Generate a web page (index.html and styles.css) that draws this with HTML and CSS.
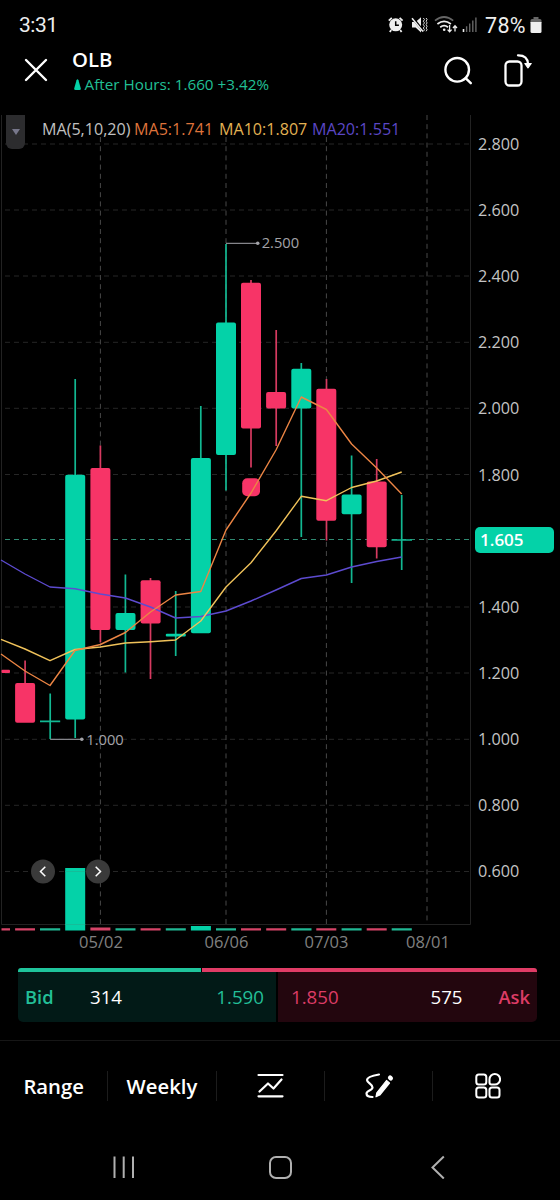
FILE: index.html
```html
<!DOCTYPE html>
<html lang="en">
<head>
  <meta charset="utf-8">
  <meta name="viewport" content="width=device-width, initial-scale=1">
  <title>OLB</title>
  <link rel="stylesheet" href="styles.css">
</head>
<body>
  <div class="status">
    <span class="clock">3:31</span>
    <svg class="status-icons" width="92" height="20" viewBox="387 15 92 20">
      <!-- alarm -->
      <circle cx="395.7" cy="24.8" r="6.5" fill="#eee"/>
      <path d="M388.8 20.6l3-2.8M402.6 20.6l-3-2.8M391.2 30l-1.4 2M400.2 30l1.4 2" stroke="#eee" stroke-width="1.8"/>
      <path d="M395.7 21.3v3.9h3.2" fill="none" stroke="#000" stroke-width="1.5"/>
      <!-- muted, vibrate -->
      <path d="M412 22h3.6l5.4-4.8v15.2l-5.4-4.8H412z" fill="#eee"/>
      <path d="M412.4 17.6l11 13.6" stroke="#000" stroke-width="2.6"/>
      <path d="M412 18.2l11 13.4" stroke="#eee" stroke-width="1.5"/>
      <path d="M423.3 18l1.2 1.6-1.2 1.6 1.2 1.7-1.2 1.7 1.2 1.7-1.2 1.7 1.2 1.7-1 1.6M426.1 18l1 1.6-1 1.6 1 1.7-1 1.7 1 1.7-1 1.7 1 1.7-1 1.6" fill="none" stroke="#ddd"/>
      <!-- wifi -->
      <path d="M435 20.6q9-7.2 18.2 0" fill="none" stroke="#666" stroke-width="1.7"/>
      <path d="M437.4 24q6.7-5.2 13.5 0M440.2 27.2q4-3 7.8 0" fill="none" stroke="#eee" stroke-width="1.8"/>
      <circle cx="444.2" cy="29.8" r="1.3" fill="#eee"/>
      <path d="M449.6 25v6.5M447.6 29.6l2 2.2 2-2.2M455 31.5v-5.8M453 28l2-2.2 2 2.2" fill="none" stroke="#eee" stroke-width="1.3"/>
      <!-- signal -->
      <path d="M463.5 29v3" stroke="#eee" stroke-width="1.6"/>
      <path d="M466.6 26.3V32M469.7 23.6V32M472.8 20.6V32M475.9 17.5V32" stroke="#666" stroke-width="1.4"/>
    </svg>
    <span class="percent">78%</span>
    <svg width="12" height="17" viewBox="0 0 12 17">
      <path d="M3.5 0h5v2H10q1.500 0 1.500 1.500V6H.5V3.500Q.5 2 2 2h1.500z" fill="#666"/>
      <path d="M.5 5h11v9.500q0 1.500-1.500 1.500H2q-1.500 0-1.500-1.500z" fill="#eee"/>
    </svg>
  </div>

  <div class="header">
    <svg class="close" width="24" height="24" viewBox="0 0 24 24">
      <path d="M2 2l20 20M22 2L2 22" stroke="#fff" stroke-width="2.4" stroke-linecap="round"/>
    </svg>
    <div class="stock">
      <div class="symbol">OLB</div>
      <div class="after-hours">
        <svg width="7" height="11" viewBox="0 0 7 11"><path d="M2.500 1.200Q3.500-.8 4.500 1.200L6.800 9.500Q7 11 5.500 11h-4Q0 11 .2 9.500z" fill="#04d2a8"/></svg>
        <span>After Hours: 1.660 +3.42%</span>
      </div>
    </div>
    <svg class="search" width="30" height="30" viewBox="0 0 30 30" fill="none" stroke="#fff" stroke-width="2.400" stroke-linecap="round">
      <circle cx="14.200" cy="13.800" r="11.800"/>
      <path d="M22.600 22.200l5.200 5"/>
    </svg>
    <svg class="rotate" width="28" height="34" viewBox="0 0 28 34" fill="none" stroke="#fff" stroke-width="2.300">
      <rect x="1.500" y="8.500" width="16" height="24" rx="4"/>
      <path d="M14 2.300q9.500-.2 10 8.500" stroke-linecap="round"/>
      <path d="M20.800 10.500l3.200 4.300 3.200-4.300z" fill="#fff" stroke-width="1.200" stroke-linejoin="round"/>
    </svg>
  </div>

  <div class="chart">
    <svg class="plot" width="472" height="841" viewBox="0 115 472 841">
      <g class="frame">
        <path d="M1.500 115V924.500M470.500 115V924.500M1.500 924.500H470.500"/>
      </g>
      <g class="grid-h">
        <path d="M5 144H470M5 210H470M5 276H470M5 342.300H470M5 408.300H470M5 474.500H470M5 607H470M5 673H470M5 739.300H470M5 805.300H470M5 871.500H470"/>
      </g>
      <g class="grid-v">
        <path d="M100.400 137V924M226 137V924M326.400 137V924M427 115V924"/>
      </g>
      <path class="last-price" d="M5 539.500H470"/>

      <g class="up">
        <path d="M50.200 693.500V739M75.200 379V738M125.400 574.500V672.500M175.700 591V656M200.800 406V460M226 244V490.500M301.300 363V537M351.600 455.500V583M401.700 495V570"/>
        <path d="M40 721.300H60.200M391.500 540H412" />
        <rect x="65.200" y="474.800" width="20" height="244.700" rx="2"/>
        <rect x="115.500" y="613" width="20" height="17" rx="2"/>
        <rect x="165.800" y="633.800" width="20" height="2.800" rx="1"/>
        <rect x="190.900" y="458" width="20" height="175.300" rx="2"/>
        <rect x="216" y="322.500" width="20" height="132.500" rx="2"/>
        <rect x="291.300" y="368.800" width="20" height="39.600" rx="2"/>
        <rect x="341.600" y="494.500" width="20" height="19.800" rx="2"/>
      </g>
      <g class="down">
        <path d="M25.100 660.500V684M100.400 445.500V642.500M150.500 578V679M251 280V467.500M276.200 330V446M326.500 379V540.500M376.700 459V558.500"/>
        <rect x="1.500" y="669.700" width="8.500" height="3.200" rx="1"/>
        <rect x="15.100" y="683" width="20" height="39.800" rx="2"/>
        <rect x="90.400" y="468" width="20" height="162" rx="2"/>
        <rect x="140.600" y="580.300" width="20" height="43.200" rx="2"/>
        <rect x="241" y="282.800" width="20" height="145.600" rx="2"/>
        <rect x="266.100" y="392" width="20" height="16.400" rx="2"/>
        <rect x="316.300" y="388.800" width="20" height="132" rx="2"/>
        <rect x="366.700" y="481.500" width="20" height="65.800" rx="2"/>
        <rect x="242.200" y="478.300" width="17.800" height="18" rx="5"/>
      </g>

      <g class="ma">
        <polyline class="ma20" points="1,560 25,574 50,587 75,588.700 100.400,594 125.400,598 150.500,607 175.600,618 200.800,616.500 226,611 251,601 276,590 301.300,578.500 326.400,575 351.600,567 376.700,561.500 401.700,557"/>
        <polyline class="ma10" points="1,639.300 25,649 50,660.700 75,649.500 100.400,647 125.400,643 150.500,641.700 175.600,640 200.800,621 226,587 251,562.700 276,531 301.300,496.300 326.400,500.700 351.600,487.500 376.700,481 401.700,472"/>
        <polyline class="ma5" points="1,654 25,671 50,685.500 75,650.500 100.400,644.500 125.400,632.500 150.500,612 175.600,595 200.800,591.500 226,530 251,493 276,450 301.300,397 326.400,409.500 351.600,444 376.700,468 401.700,494"/>
      </g>

      <!-- high / low markers -->
      <g class="marker">
        <path d="M226 243.300H257M50.200 739.300H81"/>
        <circle cx="257.700" cy="243.200" r="1.800"/>
        <circle cx="81.800" cy="739.300" r="1.800"/>
        <text x="261.700" y="248">2.500</text>
        <text x="86.300" y="744.500">1.000</text>
      </g>

      <!-- volume -->
      <g class="vol-up">
        <rect x="65.200" y="868" width="20" height="62.500"/>
        <rect x="190.900" y="926" width="20" height="4.500"/>
        <path d="M40 929.300H60.200M115.500 929.300H135.500M165.800 929.300H185.800M216 929.300H236M291.300 929.300H311.500M341.600 929.300H361.600M391.700 929.300H411.800"/>
      </g>
      <g class="vol-down">
        <path d="M1.500 929.300H10M15.100 929.300H35M140.600 929.300H160.600M241 929.300H261M266.200 929.300H286.200M316.300 929.300H336.300M366.700 929.300H386.700"/>
        <rect x="90.400" y="927.500" width="20" height="3"/>
      </g>
      <path d="M65.200 871.500H85.200M65.200 924.500H85.200" stroke="#1bb795" stroke-width=".8"/>

      <g class="pager">
        <circle cx="43" cy="871.500" r="12"/>
        <circle cx="98" cy="871.500" r="12"/>
        <path d="M45.300 866.700l-4.800 4.800 4.800 4.800M95.700 866.700l4.800 4.800-4.800 4.800"/>
      </g>

      <g class="dates">
        <text x="101" y="948">05/02</text>
        <text x="226.500" y="948">06/06</text>
        <text x="326.500" y="948">07/03</text>
        <text x="428" y="948">08/01</text>
      </g>
    </svg>

    <div class="prices">
      <span>2.800</span>
      <span>2.600</span>
      <span>2.400</span>
      <span>2.200</span>
      <span>2.000</span>
      <span>1.800</span>
      <span><b class="price-tag">1.605</b></span>
      <span>1.400</span>
      <span>1.200</span>
      <span>1.000</span>
      <span>0.800</span>
      <span>0.600</span>
    </div>

    <div class="legend">
      <div class="toggle"><i></i></div>
      <span class="l-name">MA(5,10,20)</span>
      <span class="l-ma5">MA5:1.741</span>
      <span class="l-ma10">MA10:1.807</span>
      <span class="l-ma20">MA20:1.551</span>
    </div>
  </div>

  <div class="book">
    <div class="ratio"><i class="ratio-bid"></i><i class="ratio-ask"></i></div>
    <div class="quotes">
      <div class="bid"><b>Bid</b><span class="size">314</span><span class="price">1.590</span></div>
      <div class="ask"><span class="price">1.850</span><span class="size">575</span><b>Ask</b></div>
    </div>
  </div>

  <div class="toolbar">
    <div class="tool">Range</div>
    <div class="tool">Weekly</div>
    <div class="tool">
      <svg width="28" height="26" viewBox="0 0 28 26" fill="none" stroke="#fff" stroke-width="2.200" stroke-linecap="round" stroke-linejoin="round">
        <path d="M2.500 2H26.500M2.500 23.300H26.500M3.500 18.500l8.500-8 5.500 5 8-9"/>
      </svg>
    </div>
    <div class="tool">
      <svg width="30" height="28" viewBox="0 0 30 28" fill="none" stroke="#fff" stroke-width="2.200" stroke-linecap="round">
        <path d="M15 2.500Q3 4.500 3 8C3 11 8.500 12 8.500 15.500C8.500 18.500 2.500 18.500 2.500 21.500Q2.500 25 8.500 25"/>
        <path d="M12 24.800l.8-4 9.700-12.300 3 2.500-9.700 12z" fill="#fff" stroke-width="1.200" stroke-linejoin="round"/>
        <path d="M26.200 5.800l.5.400" stroke-width="4.600"/>
      </svg>
    </div>
    <div class="tool">
      <svg width="28" height="28" viewBox="0 0 28 28" fill="none" stroke="#fff" stroke-width="2">
        <rect x="3.300" y="2.500" width="10" height="10" rx="2.500"/>
        <path d="M16.500 7.300a5.300 5.300 0 1 1 5.300 5.300H18.500q-2 0-2-2z"/>
        <rect x="3.300" y="15.500" width="10" height="10" rx="2.500"/>
        <rect x="16.500" y="15.500" width="10" height="10" rx="2.500"/>
      </svg>
    </div>
  </div>

  <div class="nav">
    <svg width="24" height="24" viewBox="0 0 24 24"><path d="M3.500 1.500v21.500M12.700 1.500v21.500M22 1.500v21.500" stroke="#b0b0b0" stroke-width="2"/></svg>
    <svg width="24" height="24" viewBox="0 0 24 24"><rect x="2" y="2" width="21" height="21" rx="6" fill="none" stroke="#b0b0b0" stroke-width="2"/></svg>
    <svg width="24" height="24" viewBox="0 0 24 24"><path d="M18.800 1.500L7.500 12.500l11.300 11" fill="none" stroke="#b0b0b0" stroke-width="2"/></svg>
  </div>
</body>
</html>
```
FILE: styles.css
```css
* {box-sizing: border-box;}
body {margin: 0; width: 560px; height: 1200px; overflow: hidden; background: #000; color: #fff;
  font-family: "Open Sans", "Noto Sans", sans-serif; display: flex; flex-direction: column;}
body > div {flex: none;}
svg {display: block; flex: none;}

/* status bar */
.status {height: 48px; padding: 2px 18px 0 19px; display: flex; align-items: center;
  font-family: Roboto, sans-serif; font-size: 21px; color: #eee;}
.clock {flex: 1; letter-spacing: -.5px;}
.percent {margin: 0 3px 0 6px; width: 42px; white-space: nowrap; font-size: 21.500px; letter-spacing: .3px;}

/* header */
.header {height: 67px; padding: 0 28px 0 24px; display: flex; align-items: flex-start;}
.close {margin-top: 10px;}
.stock {flex: 1; margin-left: 24px;}
.symbol {font-size: 20.300px; font-weight: 600; line-height: 26px; margin: -2px 0 1px;}
.after-hours {display: flex; align-items: center; gap: 3.500px; padding-left: 2px; font-size: 15.250px; line-height: 22px; color: #20bf94;}
.search {margin-top: 8px;}
.rotate {margin: 5px 0 0 31px;}

/* chart */
.chart {position: relative; height: 841px; display: flex;}
.frame {stroke: #222; fill: none;}
.grid-h {stroke: #262626; stroke-dasharray: 5 4;}
.grid-v {stroke: #484848; stroke-dasharray: 5 4.200;}
.last-price {stroke: #2f8a72; stroke-width: 1.200; stroke-dasharray: 5 4;}
.up {fill: #04d2a8; stroke: none;}
.up path {stroke: #12b892; stroke-width: 1.700;}
.down {fill: #f73467;}
.down path {stroke: #d63a60; stroke-width: 1.700;}
.ma {fill: none; stroke-width: 1.400; stroke-linejoin: round;}
.ma5 {stroke: #ec8544;}
.ma10 {stroke: #f0c25a;}
.ma20 {stroke: #5d4bd0;}
.marker {fill: #a3a3a8; font-size: 14.700px;}
.marker path {stroke: #85858a; stroke-width: 1.300;}
.vol-up {fill: #04d2a8;}
.vol-up path {stroke: #20b894; stroke-width: 2.300;}
.vol-down {fill: #d64468;}
.vol-down path {stroke: #d64468; stroke-width: 2.300;}
.pager {fill: #3a3a3a;}
.pager path {fill: none; stroke: #fff; stroke-width: 1.500;}
.dates {fill: #808080; font-size: 16.500px; text-anchor: middle;}

.prices {flex: 1; margin-top: -4px; font-size: 16.200px; color: #c4c4c4;}
.prices span {display: flex; align-items: center; height: 66.100px; padding-left: 6px;}
.price-tag {margin: -2px 0 0 -3px; width: 79px; height: 26px; padding-left: 5px; border-radius: 5px;
  background: #04d2a8; color: #fff; font-weight: 600; line-height: 26px; font-size: 17px;}

/* legend lies over the top of the grid */
.legend {position: absolute; left: 6px; top: 0; display: flex; font-size: 16.100px; line-height: 29px; white-space: nowrap;}
.toggle {width: 19px; height: 34px; margin-right: 17px; border-radius: 0 0 6px 6px; background: #2c2c2e; display: flex; align-items: center; justify-content: center;}
.toggle i {border: 4.500px solid transparent; border-top: 6px solid #77778a; border-bottom: 0;}
.l-name {width: 92px; color: #c0c0c0;}
.l-ma5 {width: 85px; color: #df733b;}
.l-ma10 {width: 93px; color: #e3b253;}
.l-ma20 {color: #5b47c4;}

/* bid / ask */
.book {margin: 12px 23px 0 18px; height: 54px;}
.ratio {display: flex; gap: 1px; height: 4px;}
.ratio i {border-radius: 3px 0 0 0;}
.ratio-bid {width: 183px; background: #1fc49c;}
.ratio .ratio-ask {flex: 1; background: #e03c66; border-radius: 0 3px 0 0;}
.quotes {display: flex; gap: 2px; height: 50px; font-size: 18.700px; line-height: 50px;}
.bid, .ask {display: flex; padding: 0 7px;}
.bid {width: 258px; background: #021a17; color: #22bf98; border-radius: 0 0 0 5px;}
.ask {flex: 1; background: #23060e; color: #dc3c65; border-radius: 0 0 5px 0;}
.quotes b {font-weight: 600; font-size: 18.300px;}
.size {color: #fff;}
.bid b {width: 65px;}
.bid .price {margin-left: auto; padding-right: 5px;}
.ask .price {padding-left: 6px; flex: 1;}
.ask .size {margin-right: 36px;}

/* toolbar */
.toolbar {height: 90px; margin-top: 18px; border-top: 1px solid #161616; display: flex; align-items: center;}
.tool {width: 108.300px; height: 30px; border-right: 1px solid #1c1c1c; display: flex; align-items: center; justify-content: center;
  font-size: 20.300px; font-weight: 600;}
.tool:last-child {border: 0;}

.nav {height: 73px; padding: 0 45px; display: flex; align-items: center; justify-content: space-around;}
```
